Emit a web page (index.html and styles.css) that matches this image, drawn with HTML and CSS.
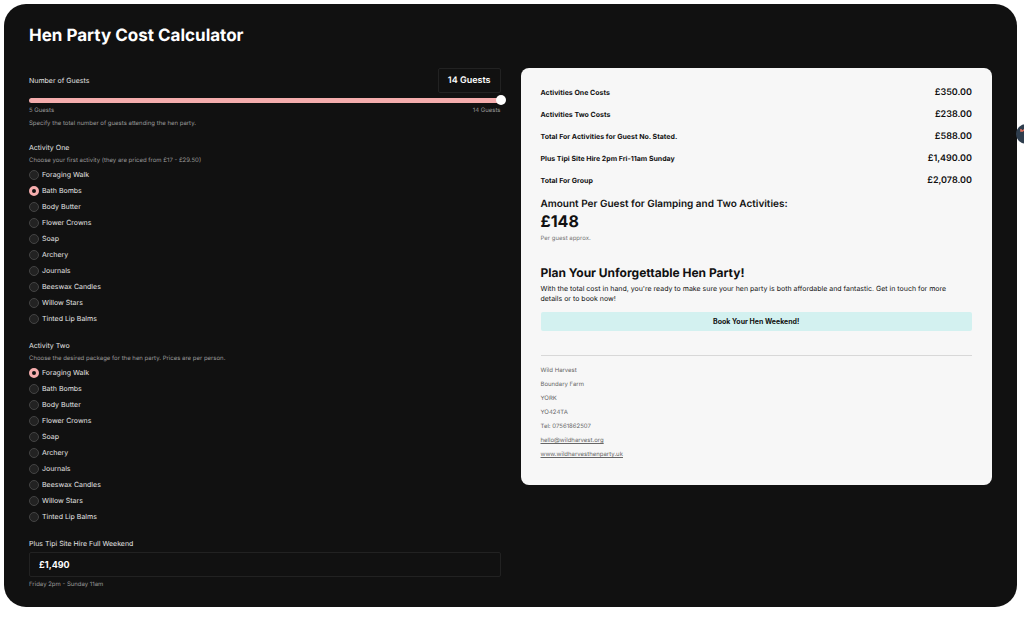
FILE: index.html
```html
<!DOCTYPE html>
<html lang="en">
<head>
<meta charset="utf-8">
<title>Hen Party Cost Calculator</title>
<link rel="stylesheet" href="styles.css">
</head>
<body>
<main class="calculator">
  <h1 class="title">Hen Party Cost Calculator</h1>
  <div class="columns">
    <form class="form">
      <div class="field">
        <div class="guest-head">
          <label class="label" for="guests">Number of Guests</label>
          <output class="guest-count" for="guests">14 Guests</output>
        </div>
        <input class="slider" type="range" id="guests" min="5" max="14" value="14">
        <div class="limits"><span>5 Guests</span><span>14 Guests</span></div>
        <p class="hint guest-hint">Specify the total number of guests attending the hen party.</p>
      </div>
      <fieldset class="field">
        <legend class="label">Activity One</legend>
        <p class="hint">Choose your first activity (they are priced from £17 - £29.50)</p>
        <div class="options">
          <label class="option"><input type="radio" name="one">Foraging Walk</label>
          <label class="option"><input type="radio" name="one" checked>Bath Bombs</label>
          <label class="option"><input type="radio" name="one">Body Butter</label>
          <label class="option"><input type="radio" name="one">Flower Crowns</label>
          <label class="option"><input type="radio" name="one">Soap</label>
          <label class="option"><input type="radio" name="one">Archery</label>
          <label class="option"><input type="radio" name="one">Journals</label>
          <label class="option"><input type="radio" name="one">Beeswax Candles</label>
          <label class="option"><input type="radio" name="one">Willow Stars</label>
          <label class="option"><input type="radio" name="one">Tinted Lip Balms</label>
        </div>
      </fieldset>
      <fieldset class="field">
        <legend class="label">Activity Two</legend>
        <p class="hint">Choose the desired package for the hen party. Prices are per person.</p>
        <div class="options">
          <label class="option"><input type="radio" name="two" checked>Foraging Walk</label>
          <label class="option"><input type="radio" name="two">Bath Bombs</label>
          <label class="option"><input type="radio" name="two">Body Butter</label>
          <label class="option"><input type="radio" name="two">Flower Crowns</label>
          <label class="option"><input type="radio" name="two">Soap</label>
          <label class="option"><input type="radio" name="two">Archery</label>
          <label class="option"><input type="radio" name="two">Journals</label>
          <label class="option"><input type="radio" name="two">Beeswax Candles</label>
          <label class="option"><input type="radio" name="two">Willow Stars</label>
          <label class="option"><input type="radio" name="two">Tinted Lip Balms</label>
        </div>
      </fieldset>
      <div class="field">
        <label class="label" for="hire">Plus Tipi Site Hire Full Weekend</label>
        <input class="text-box" type="text" id="hire" value="£1,490" readonly>
        <p class="hint">Friday 2pm - Sunday 11am</p>
      </div>
    </form>
    <section class="summary">
      <dl class="costs">
        <div class="cost"><dt>Activities One Costs</dt><dd>£350.00</dd></div>
        <div class="cost"><dt>Activities Two Costs</dt><dd>£238.00</dd></div>
        <div class="cost"><dt>Total For Activities for Guest No. Stated.</dt><dd>£588.00</dd></div>
        <div class="cost"><dt>Plus Tipi Site Hire 2pm Fri-11am Sunday</dt><dd>£1,490.00</dd></div>
        <div class="cost"><dt>Total For Group</dt><dd>£2,078.00</dd></div>
      </dl>
      <h2 class="amount-title">Amount Per Guest for Glamping and Two Activities:</h2>
      <p class="amount">£148</p>
      <p class="note">Per guest approx.</p>
      <h2 class="plan-title">Plan Your Unforgettable Hen Party!</h2>
      <p class="plan-text">With the total cost in hand, you're ready to make sure your hen party is both affordable and fantastic. Get in touch for more details or to book now!</p>
      <button class="book" type="button">Book Your Hen Weekend!</button>
      <address class="contact">
        <span>Wild Harvest</span>
        <span>Boundary Farm</span>
        <span>YORK</span>
        <span>YO424TA</span>
        <span>Tel: 07561862507</span>
        <a href="mailto:hello@wildharvest.org">hello@wildharvest.org</a>
        <a href="http://www.wildharvesthenparty.uk">www.wildharvesthenparty.uk</a>
      </address>
    </section>
  </div>
</main>
<button class="bubble" type="button" aria-label="Open widget">
  <svg viewBox="0 0 20 20" width="20" height="20" aria-hidden="true"><path d="M5 5V7H6.500L8 6 10 7.500 12 6" fill="none" stroke="#e8705c" stroke-width="1.500"/></svg>
</button>
</body>
</html>
```

FILE: styles.css
```css
* { box-sizing: border-box; }

body {
  margin: 0;
  padding: 4px 7px 14px 4px;
  background: #fff;
  color: #e4e4e4;
  font-family: Inter, "Liberation Sans", sans-serif;
  font-size: 7px;
  line-height: 10px;
  text-rendering: geometricPrecision;
  overflow-x: hidden;
}

h1, h2, p, dl, dd, fieldset { margin: 0; }

.calculator {
  padding: 20px 25px 18px;
  border-radius: 22px;
  background: #111;
}

.title {
  margin-bottom: 20px;
  color: #fff;
  font-size: 17px;
  font-weight: 700;
  line-height: 24px;
}

.columns {
  display: grid;
  grid-template-columns: 1fr 1fr;
  gap: 20px;
  align-items: start;
}

.form {
  display: flex;
  flex-direction: column;
  gap: 14px;
}

.field {
  display: flex;
  flex-direction: column;
  min-width: 0;
  padding: 0;
  border: 0;
}

.label { padding: 0; font-size: 7px; line-height: 10px; }

.guest-head {
  display: flex;
  align-items: center;
  justify-content: space-between;
}

.guest-count {
  padding: 0 9px;
  border: 1px solid #222;
  border-radius: 2px;
  color: #fff;
  font-size: 9px;
  font-weight: 600;
  line-height: 23px;
}

.slider {
  appearance: none;
  width: calc(100% + 5px);
  height: 14px;
  margin: 0;
  background: none;
}

.slider::-webkit-slider-runnable-track {
  height: 5px;
  border-radius: 3px;
  background: linear-gradient(#f5adad, #f5adad) left / calc(100% - 5px) 100% no-repeat;
}

.slider::-webkit-slider-thumb {
  appearance: none;
  width: 10px;
  height: 10px;
  margin-top: -3px;
  border-radius: 50%;
  background: #fff;
}

.limits {
  display: flex;
  justify-content: space-between;
  color: #999;
  font-size: 6px;
  line-height: 8px;
}

.hint {
  margin-top: 4px;
  color: #999;
  font-size: 6px;
  line-height: 8px;
}

.guest-hint { margin: 5px 0 1px; }

.options { margin-top: 2px; }

.option {
  display: flex;
  align-items: center;
  gap: 3px;
  height: 16px;
}

.option input {
  appearance: none;
  width: 10px;
  height: 10px;
  margin: 0;
  border: 1px solid #444;
  border-radius: 50%;
  background: #222;
}

.option input:checked {
  border: 3px solid #f5adad;
  background: #111;
}

.text-box {
  width: 100%;
  height: 25px;
  margin-top: 3px;
  padding: 0 9px;
  border: 1px solid #222;
  border-radius: 2px;
  background: #111;
  color: #fff;
  font: 700 9px Inter, "Liberation Sans", sans-serif;
}

.summary {
  padding: 14px 20px 23px;
  border-radius: 8px;
  background: #f7f7f7;
  color: #111;
}

.cost {
  display: flex;
  justify-content: space-between;
  font-weight: 700;
  line-height: 22px;
}

.cost dd { font-size: 9px; font-weight: 600; }

.amount-title {
  margin-top: 5px;
  font-size: 10px;
  font-weight: 600;
  line-height: 14px;
}

.amount {
  font-size: 16px;
  font-weight: 700;
  line-height: 20px;
}

.note {
  margin-top: 4px;
  color: #777;
  font-size: 6px;
  line-height: 8px;
}

.plan-title {
  margin-top: 22px;
  font-size: 12px;
  font-weight: 700;
  line-height: 16px;
}

.plan-text { margin-top: 3px; padding-right: 12px; }

.book {
  display: block;
  width: 100%;
  margin-top: 8px;
  padding: 0;
  border: 0;
  border-radius: 2px;
  background: #d3f1f0;
  color: #111;
  font: 700 7px/19px Inter, "Liberation Sans", sans-serif;
}

.contact {
  display: flex;
  flex-direction: column;
  align-items: flex-start;
  margin-top: 24px;
  padding-top: 8px;
  border-top: 1px solid #d8d8d8;
  color: #666;
  font-size: 6px;
  font-style: normal;
  line-height: 14px;
}

.contact a { color: inherit; }

.bubble {
  position: absolute;
  top: 124px;
  right: -12px;
  width: 20px;
  height: 20px;
  padding: 0;
  border: 0;
  border-radius: 50%;
  background: #2f3e4e;
}

.bubble svg { display: block; }
```
